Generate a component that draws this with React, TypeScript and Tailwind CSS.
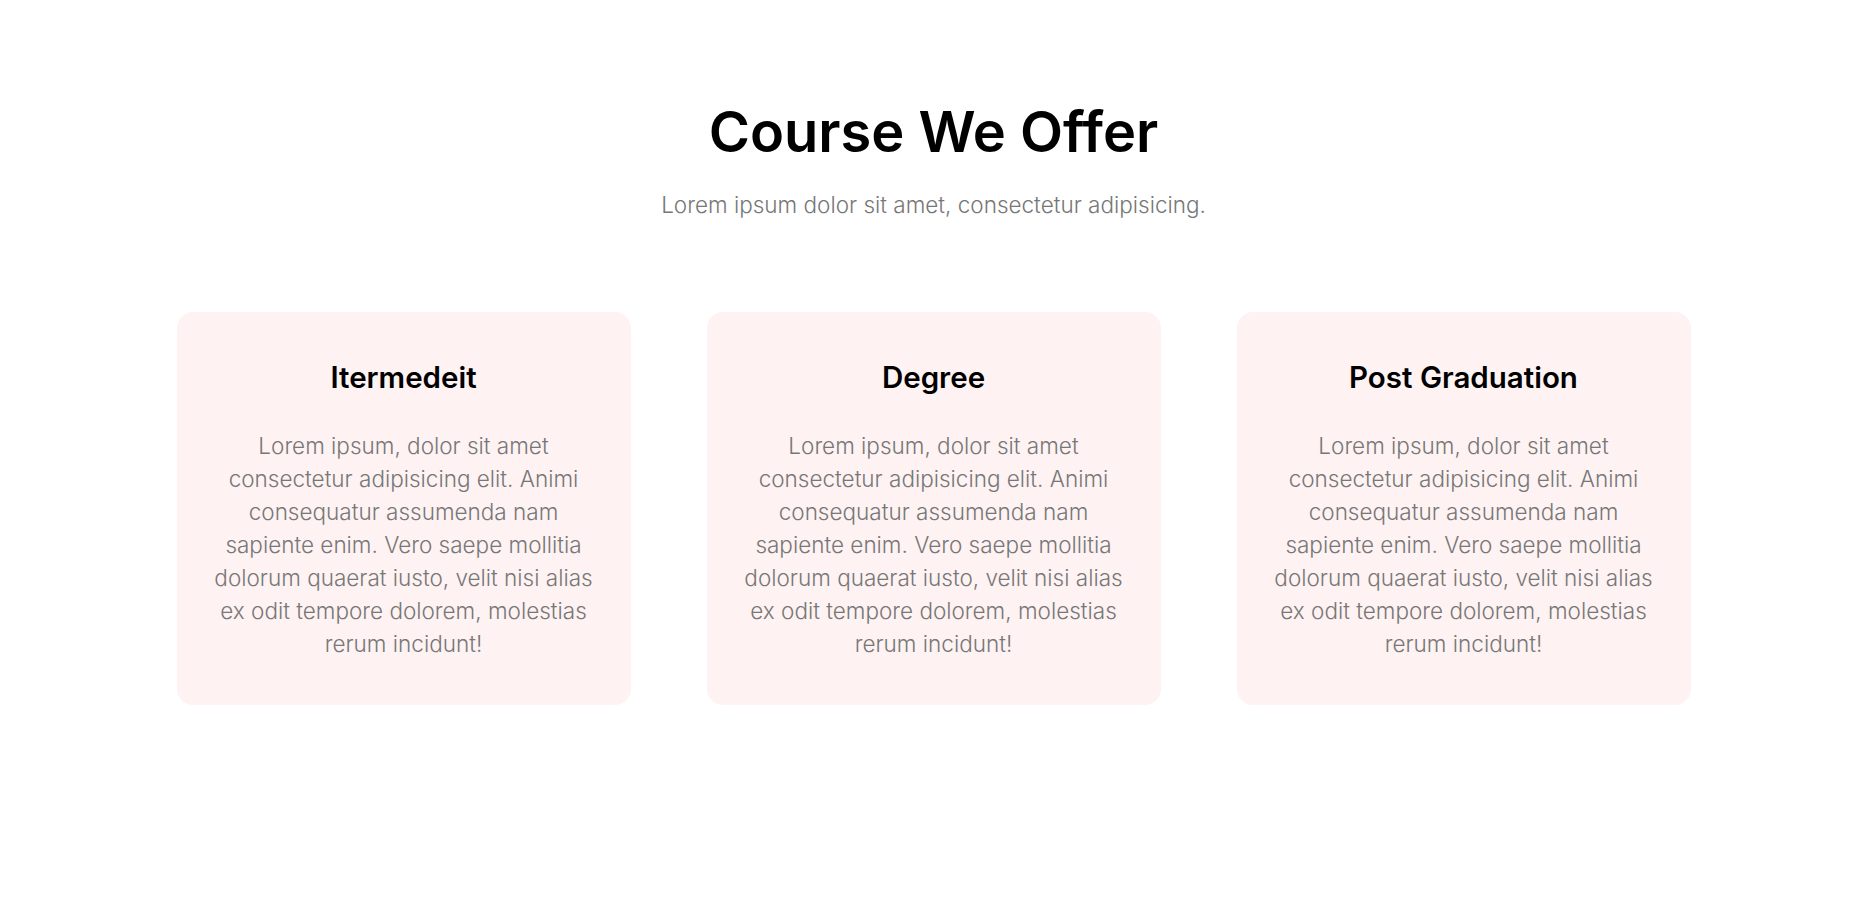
import React from 'react';

const bodyLines = [
  'Lorem ipsum, dolor sit amet',
  'consectetur adipisicing elit. Animi',
  'consequatur assumenda nam',
  'sapiente enim. Vero saepe mollitia',
  'dolorum quaerat iusto, velit nisi alias',
  'ex odit tempore dolorem, molestias',
  'rerum incidunt!',
];

const courses = ['Itermedeit', 'Degree', 'Post Graduation'];

const CourseCard: React.FC<{ title: string }> = ({ title }) => (
  <div className="w-[454px] rounded-2xl bg-[#fef2f2] px-[30px] pt-[44px] pb-[45px] text-center">
    <h3 className="text-[29.5px] font-semibold leading-[42px] text-black">{title}</h3>
    <p className="mt-[31px] text-[22.5px] font-light leading-[33px] text-[#777]">
      {bodyLines.map((line, i) => (
        <span key={i} className="block whitespace-nowrap">
          {line}
        </span>
      ))}
    </p>
  </div>
);

export default function App() {
  return (
    <div className="min-h-[900px] bg-white pr-[6px] font-['Inter','Open_Sans',sans-serif]">
      <div className="pt-[100px] text-center">
        <h1 className="text-[56px] font-semibold leading-[64px] text-black">Course We Offer</h1>
        <p className="mt-[24px] text-[22.5px] font-light leading-[33px] text-[#777]">
          Lorem ipsum dolor sit amet, consectetur adipisicing.
        </p>
      </div>
      <div className="mt-[91px] flex justify-center gap-[76px]">
        {courses.map((c) => (
          <CourseCard key={c} title={c} />
        ))}
      </div>
    </div>
  );
}
